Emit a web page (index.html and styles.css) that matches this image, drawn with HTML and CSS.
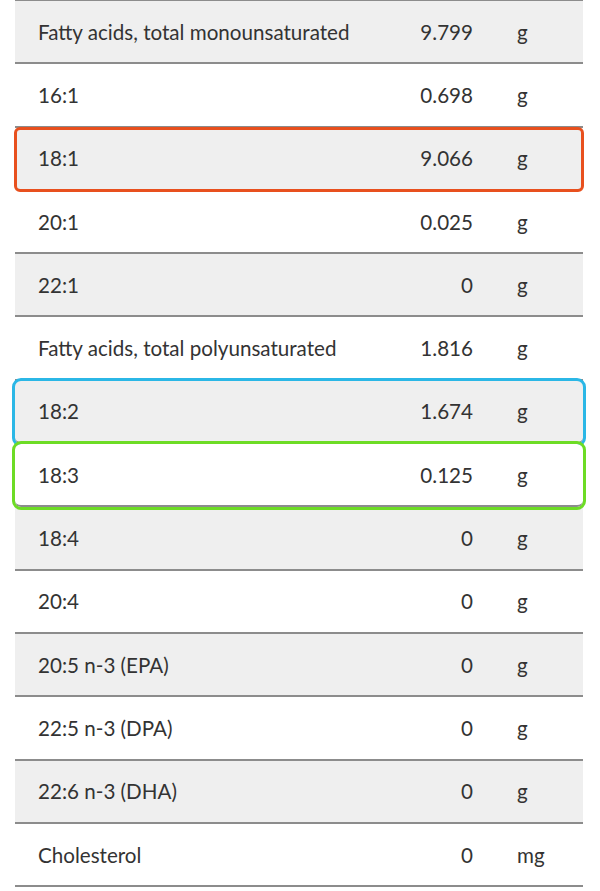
FILE: index.html
```html
<!DOCTYPE html>
<html lang="en">
<head>
<meta charset="utf-8">
<title>Nutrients</title>
<link rel="stylesheet" href="styles.css">
</head>
<body>
<div class="table">
  <div class="row alt"><span class="name">Fatty acids, total monounsaturated</span><span class="val">9.799</span><span class="unit">g</span></div>
  <div class="row"><span class="name">16:1</span><span class="val">0.698</span><span class="unit">g</span></div>
  <div class="row alt hl-orange"><span class="name">18:1</span><span class="val">9.066</span><span class="unit">g</span></div>
  <div class="row"><span class="name">20:1</span><span class="val">0.025</span><span class="unit">g</span></div>
  <div class="row alt"><span class="name">22:1</span><span class="val">0</span><span class="unit">g</span></div>
  <div class="row"><span class="name">Fatty acids, total polyunsaturated</span><span class="val">1.816</span><span class="unit">g</span></div>
  <div class="row alt hl-blue"><span class="name">18:2</span><span class="val">1.674</span><span class="unit">g</span></div>
  <div class="row hl-green"><span class="name">18:3</span><span class="val">0.125</span><span class="unit">g</span></div>
  <div class="row alt"><span class="name">18:4</span><span class="val">0</span><span class="unit">g</span></div>
  <div class="row"><span class="name">20:4</span><span class="val">0</span><span class="unit">g</span></div>
  <div class="row alt"><span class="name">20:5 n-3 (EPA)</span><span class="val">0</span><span class="unit">g</span></div>
  <div class="row"><span class="name">22:5 n-3 (DPA)</span><span class="val">0</span><span class="unit">g</span></div>
  <div class="row alt"><span class="name">22:6 n-3 (DHA)</span><span class="val">0</span><span class="unit">g</span></div>
  <div class="row"><span class="name">Cholesterol</span><span class="val">0</span><span class="unit">mg</span></div>
</div>
</body>
</html>
```
FILE: styles.css
```css
html, body {
  margin: 0;
  padding: 0;
  background: #ffffff;
}
body {
  font-family: Lato, "Liberation Sans", sans-serif;
  font-size: 20.6px;
  color: #333333;
}
.table {
  margin: 0 17px 0 15px;
  width: 568px;
  border-top: 1px solid #8c8c8c;
}
.row {
  position: relative;
  box-sizing: border-box;
  height: 63.3px;
  display: grid;
  grid-template-columns: 1fr 120px 66px;
  align-items: center;
  padding-left: 23px;
  border-bottom: 2px solid #8c8c8c;
  background: #ffffff;
}
.row.alt {
  background: #efefef;
}
.val {
  text-align: right;
  padding-right: 44px;
}
.hl-orange, .hl-blue, .hl-green {
  z-index: 1;
}
.hl-orange {
  outline: 3px solid #e8501e;
  outline-offset: -2px;
  border-radius: 5px;
}
.hl-blue {
  outline: 3px solid #2bb7e6;
  outline-offset: 0px;
  border-radius: 6px;
}
.hl-green {
  outline: 3px solid #6ddc25;
  outline-offset: 0px;
  border-radius: 6px;
}
```
